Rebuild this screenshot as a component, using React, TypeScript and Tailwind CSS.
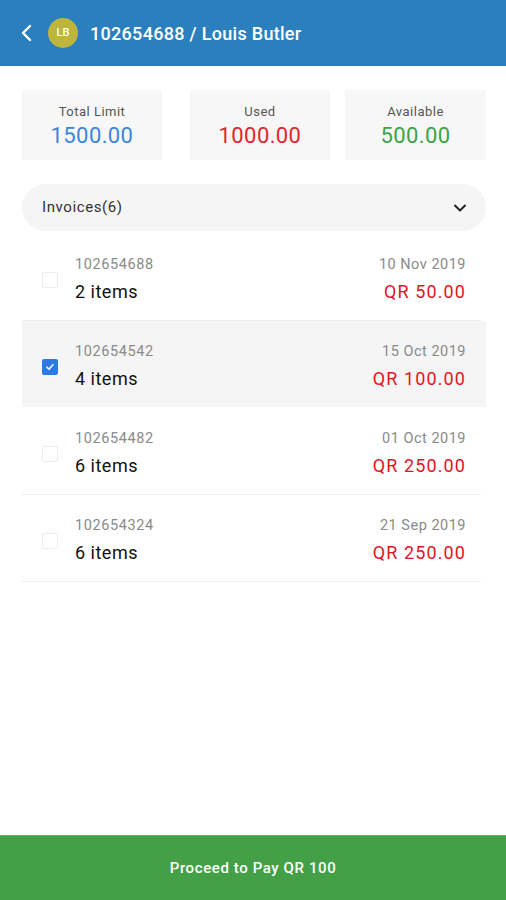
import { useState } from 'react';

const invoices = [
  { id: '102654688', items: 2, date: '10 Nov 2019', amount: 'QR 50.00' },
  { id: '102654542', items: 4, date: '15 Oct 2019', amount: 'QR 100.00' },
  { id: '102654482', items: 6, date: '01 Oct 2019', amount: 'QR 250.00' },
  { id: '102654324', items: 6, date: '21 Sep 2019', amount: 'QR 250.00' },
];

const font = { fontFamily: 'Roboto, "Noto Sans", sans-serif' };

export default function App() {
  const [selected, setSelected] = useState<string[]>(['102654542']);

  const toggle = (id: string) =>
    setSelected((s) => (s.includes(id) ? s.filter((x) => x !== id) : [...s, id]));

  return (
    <div className="min-h-[900px] flex flex-col bg-white" style={font}>
      {/* header */}
      <header className="h-[66px] bg-[#2b7fbd] flex items-center pl-[20px] shrink-0">
        <svg className="w-[14px] h-[18px]" viewBox="0 0 14 18" fill="none" stroke="white" strokeWidth="2.4" strokeLinecap="round" strokeLinejoin="round">
          <path d="M10 2L3 9l7 7" />
        </svg>
        <div className="ml-[14px] w-[30px] h-[30px] rounded-full bg-[#bdb53c] flex items-center justify-center text-white text-[11px] font-medium">
          LB
        </div>
        <h1 className="ml-[12px] text-white text-[18px] font-medium tracking-[0.3px]">102654688 / Louis Butler</h1>
      </header>

      <main className="flex-1 pl-[22px] pr-[20px]">
        {/* summary cards */}
        <div className="flex mt-[24px]">
          <div className="w-[140px] h-[70px] bg-[#f7f7f7] flex flex-col items-center pt-[13px] mr-[28px]">
            <span className="text-[13px] text-[#555] leading-[18px] tracking-[0.5px]">Total Limit</span>
            <span className="text-[22px] text-[#3a84e2] leading-[30px] tracking-[0.4px]">1500.00</span>
          </div>
          <div className="w-[140px] h-[70px] bg-[#f7f7f7] flex flex-col items-center pt-[13px] mr-[15px]">
            <span className="text-[13px] text-[#555] leading-[18px] tracking-[0.5px]">Used</span>
            <span className="text-[22px] text-[#e2252d] leading-[30px] tracking-[0.4px]">1000.00</span>
          </div>
          <div className="flex-1 h-[70px] bg-[#f7f7f7] flex flex-col items-center pt-[13px]">
            <span className="text-[13px] text-[#555] leading-[18px] tracking-[0.5px]">Available</span>
            <span className="text-[22px] text-[#3aa543] leading-[30px] tracking-[0.4px]">500.00</span>
          </div>
        </div>

        {/* invoices dropdown */}
        <button className="mt-[24px] w-full h-[47px] rounded-full bg-[#f5f5f5] flex items-center justify-between pl-[20px] pr-[18px]">
          <span className="text-[15px] text-[#333] tracking-[0.6px]">Invoices(6)</span>
          <svg className="w-[16px] h-[16px]" viewBox="0 0 16 16" fill="none" stroke="#222" strokeWidth="2" strokeLinecap="round" strokeLinejoin="round">
            <path d="M3 5.5l5 5 5-5" />
          </svg>
        </button>

        {/* list */}
        <ul className="mt-[3px]">
          {invoices.map((inv) => {
            const on = selected.includes(inv.id);
            return (
              <li key={inv.id} onClick={() => toggle(inv.id)} className="flex flex-col cursor-pointer">
                <div className={`h-[86px] flex items-start pt-[20px] pl-[20px] pr-[20px] ${on ? 'bg-[#f5f5f5]' : ''}`}>
                  <div
                    className={`mt-[18px] w-[16px] h-[16px] rounded-[2px] flex items-center justify-center shrink-0 ${on ? 'bg-[#2a7be4]' : 'border border-[#ececec] bg-white'}`}
                  >
                    {on && (
                      <svg className="w-[10px] h-[10px]" viewBox="0 0 10 10" fill="none" stroke="white" strokeWidth="1.6" strokeLinecap="round" strokeLinejoin="round">
                        <path d="M2 5.2l2 2 4-4.4" />
                      </svg>
                    )}
                  </div>
                  <div className="ml-[17px] flex flex-col">
                    <span className="text-[14.5px] text-[#8a8a8a] leading-[22px] tracking-[0.6px]">{inv.id}</span>
                    <span className="text-[18px] text-[#111] leading-[22px] mt-[5px] tracking-[0.5px]">{inv.items} items</span>
                  </div>
                  <div className="ml-auto flex flex-col items-end">
                    <span className="text-[14.5px] text-[#8a8a8a] leading-[22px] tracking-[0.5px]">{inv.date}</span>
                    <span className="text-[18px] text-[#e3141f] leading-[22px] mt-[5px] tracking-[1.1px]">{inv.amount}</span>
                  </div>
                </div>
                <div className={`h-px mr-[5px] ${on ? 'bg-transparent' : 'bg-[#eeeeee]'}`} />
              </li>
            );
          })}
        </ul>
      </main>

      {/* pay button */}
      <button className="h-[65px] w-full bg-[#43a047] border-t border-[#5cb860] text-white text-[15px] font-medium tracking-[0.6px] shrink-0">
        Proceed to Pay QR 100
      </button>
    </div>
  );
}
